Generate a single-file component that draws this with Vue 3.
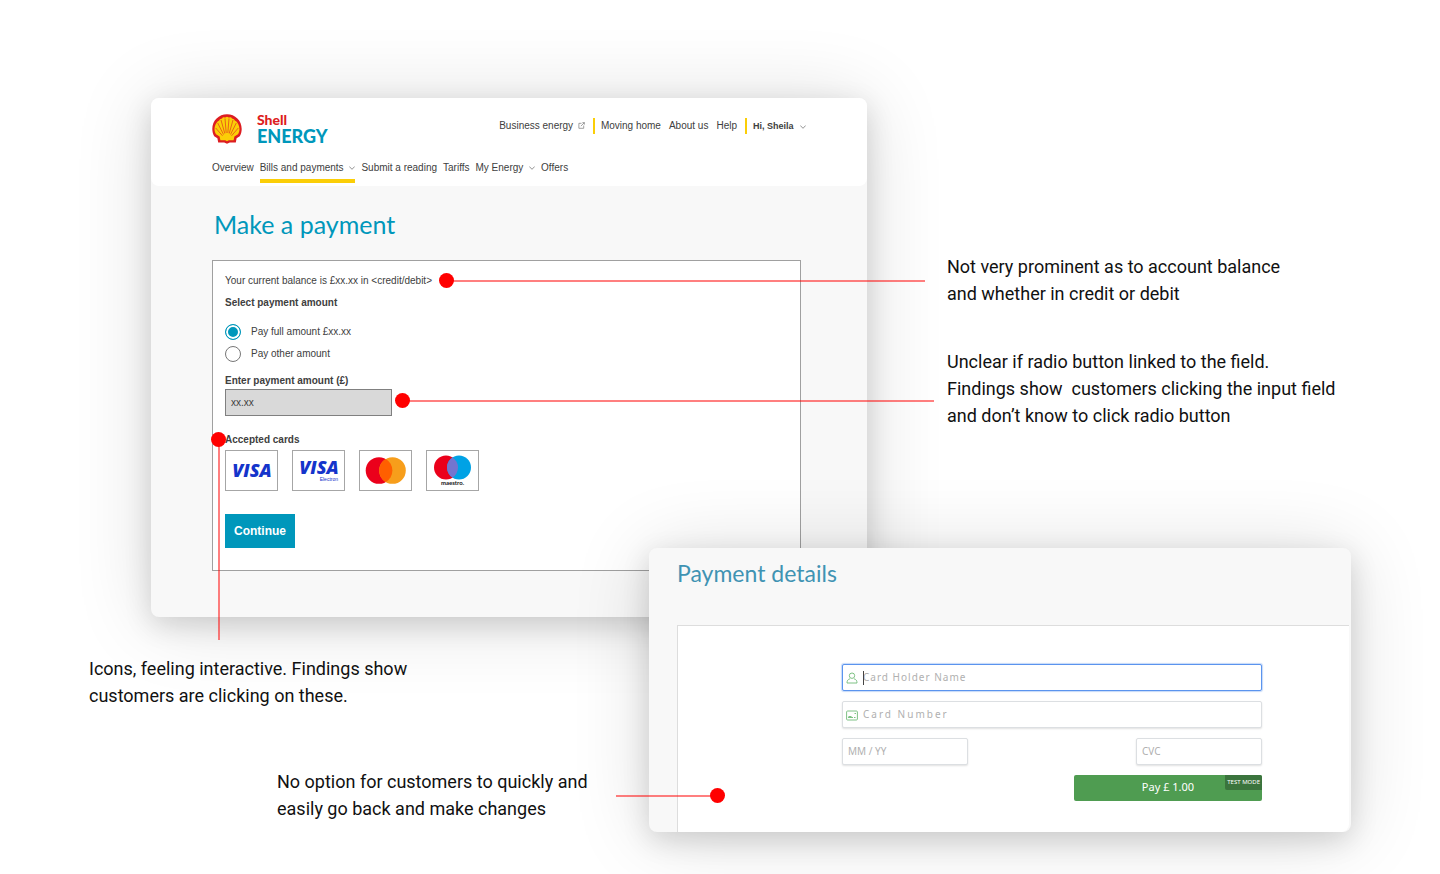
<template>
  <div class="board">
    <section class="panel account">
      <header>
        <div class="top-row">
          <a href="#" class="logo" @click.prevent>
            <svg class="pecten" viewBox="0 0 30 30" aria-hidden="true">
              <path d="M6.2 28.6 5.4 24.2 2.2 22.2C.9 20 .3 17.500.3 15 .3 6.600 6.900.3 15 .3S29.700 6.600 29.700 15c0 2.500-.6 5-1.900 7.200l-3.200 2-.8 4.400h-6L15 29.700l-2.800-1.100z" fill="#dd1d21" />
              <path d="M8.400 26.200 7.600 22.600 4 20.200C3 18.600 2.500 16.900 2.500 15 2.600 12 3.900 9.200 5.600 7.500L7.200 6.600 8 5.300 10 4.500 11 3.300 13.200 3.400 15 2.700l1.800.7 2.200-.1 1 1.200 2 .8.8 1.300 1.600.9c1.700 1.700 3 4.500 3.100 7.500 0 1.900-.5 3.600-1.500 5.200l-3.600 2.400-.8 3.600h-4.800L15 27.200l-1.800-1z" fill="#fbce07" />
              <path d="M14.200 19 13 4.500M15.800 19 17 4.500M12.800 19.500 9 6M17.200 19.500 21 6M11.500 20.500 5.700 9M18.500 20.500 24.300 9M10.500 21.800 3.700 14M19.500 21.800 26.300 14" stroke="#dd1d21" stroke-width=".6" fill="none" />
            </svg>
            <span class="wordmark">
              <span class="shell">Shell</span>
              <span class="energy">ENERGY</span>
            </span>
          </a>
          <nav class="links">
            <a href="#" @click.prevent>Business energy
              <svg class="external" viewBox="0 0 8 8" aria-hidden="true"><path d="M4 1.500H1v5.700h5.500V4M3.300 4.700 7.200.8M5 .7h2.300V3" /></svg>
            </a>
            <a href="#" class="bar" @click.prevent>Moving home</a>
            <a href="#" @click.prevent>About us</a>
            <a href="#" @click.prevent>Help</a>
            <a href="#" class="bar user" @click.prevent>Hi, Sheila
              <svg class="chevron" viewBox="0 0 6 4" aria-hidden="true"><path d="M.3.5 3 3.300 5.700.5" /></svg>
            </a>
          </nav>
        </div>
        <nav class="main-nav">
          <a v-for="item in navItems" :key="item.name" href="#" :class="{ active: item.name === currentNav }" @click.prevent="currentNav = item.name">
            {{ item.name }}
            <svg v-if="item.menu" class="chevron" viewBox="0 0 6 4" aria-hidden="true"><path d="M.3.5 3 3.300 5.700.5" /></svg>
          </a>
        </nav>
      </header>

      <h1>Make a payment</h1>
      <form class="payment" @submit.prevent>
        <p>Your current balance is £xx.xx in &lt;credit/debit&gt;</p>
        <fieldset>
          <legend>Select payment amount</legend>
          <label class="option"><input type="radio" v-model="payType" value="full">Pay full amount £xx.xx</label>
          <label class="option"><input type="radio" v-model="payType" value="other">Pay other amount</label>
        </fieldset>
        <label class="field-name" for="amount">Enter payment amount (£)</label>
        <input id="amount" class="amount" type="text" v-model="amount">
        <h2>Accepted cards</h2>
        <ul class="cards">
          <li>
            <svg viewBox="0 0 51 39" role="img" aria-label="Visa">
              <text class="visa" x="26" y="26" text-anchor="middle">VISA</text>
            </svg>
          </li>
          <li>
            <svg viewBox="0 0 51 39" role="img" aria-label="Visa Electron">
              <text class="visa" x="26" y="23" text-anchor="middle">VISA</text>
              <text class="electron" x="45" y="30" text-anchor="end">Electron</text>
            </svg>
          </li>
          <li>
            <svg viewBox="0 0 51 39" role="img" aria-label="Mastercard">
              <circle cx="19" cy="19.500" r="13.300" fill="#eb001b" />
              <circle cx="32.500" cy="19.500" r="13.300" fill="#f79e1b" />
              <path d="M25.750 8a13.300 13.300 0 0 1 0 23 13.300 13.300 0 0 1 0-23z" fill="#ff5f00" />
            </svg>
          </li>
          <li>
            <svg viewBox="0 0 51 39" role="img" aria-label="Maestro">
              <circle cx="19" cy="16.500" r="12" fill="#eb001b" />
              <circle cx="32" cy="16.500" r="12" fill="#00a2e5" />
              <path d="M25.500 6.400a12 12 0 0 1 0 20.200 12 12 0 0 1 0-20.200z" fill="#7375cf" />
              <text class="maestro" x="25.500" y="34" text-anchor="middle">maestro.</text>
            </svg>
          </li>
        </ul>
        <button class="continue" type="submit">Continue</button>
      </form>
    </section>

    <section class="panel details">
      <h2>Payment details</h2>
      <div class="sheet">
        <form class="card-form" @submit.prevent>
          <div class="icon-field focused">
            <svg viewBox="0 0 12 12" aria-hidden="true"><circle cx="6" cy="3.700" r="2.700" /><path d="M4 6.800C2 7.300 1 8.500 1 11h10c0-2.500-1-3.700-3-4.200" /></svg>
            <span class="caret"></span>
            <input type="text" aria-label="Card Holder Name" placeholder="Card Holder Name">
          </div>
          <div class="icon-field number">
            <svg viewBox="0 0 12 12" aria-hidden="true"><rect x=".6" y="2" width="10.800" height="9" rx="1" /><path d="M2 8.500h5M8 8.500h1.500M2.500 7.500h3M8.500 4.500h1.500" /></svg>
            <input type="text" aria-label="Card Number" placeholder="Card Number">
          </div>
          <div class="pair">
            <input type="text" aria-label="Expiry date" placeholder="MM / YY">
            <input type="text" aria-label="CVC" placeholder="CVC">
          </div>
          <button class="pay" type="submit">Pay £ 1.00<span class="test-mode">TEST MODE</span></button>
        </form>
      </div>
    </section>

    <!-- callouts -->
    <div class="pin pin-balance"></div>
    <p class="note note-balance">Not very prominent as to account balance<br>and whether in credit or debit</p>

    <div class="pin pin-field"></div>
    <p class="note note-field">Unclear if radio button linked to the field.<br>Findings show&nbsp; customers clicking the input field<br>and don’t know to click radio button</p>

    <div class="pin down pin-cards"></div>
    <p class="note note-cards">Icons, feeling interactive. Findings show<br>customers are clicking on these.</p>

    <div class="pin left pin-back"></div>
    <p class="note note-back">No option for customers to quickly and<br>easily go back and make changes</p>
  </div>
</template>

<script setup>
import { ref } from 'vue';

const navItems = [
  { name: 'Overview' },
  { name: 'Bills and payments', menu: true },
  { name: 'Submit a reading' },
  { name: 'Tariffs' },
  { name: 'My Energy', menu: true },
  { name: 'Offers' }
];

const currentNav = ref('Bills and payments');
const payType = ref('full');
const amount = ref('xx.xx');
</script>

<style>
body { margin: 0; background: #fff; }
</style>

<style scoped>
.board {
  position: relative;
  min-height: 100vh;
  overflow: hidden;
  font-family: "Liberation Sans", Arial, sans-serif;
  font-size: 10px;
  color: #404040;
}
.board * { box-sizing: border-box; }
h1, h2, p, ul, fieldset, legend { margin: 0; padding: 0; border: none; }
a { color: inherit; text-decoration: none; }
input, button { font: inherit; color: inherit; }

/* windows */
.panel {
  position: absolute;
  border-radius: 8px;
  background: #f8f8f8;
  box-shadow: 0 8px 28px rgba(0, 0, 0, 0.14), 0 4px 80px rgba(0, 0, 0, 0.14);
}
.account { left: 151px; top: 98px; width: 716px; padding-bottom: 46px; }
.details { left: 649px; top: 548px; width: 702px; padding: 0 2px 0 28px; }

header {
  height: 88px;
  padding: 15px 61px 0;
  border-radius: 8px;
  background: #fff;
}
.top-row { display: flex; justify-content: space-between; }
.logo { display: flex; gap: 15px; }
.pecten { width: 30px; height: 32px; }
.wordmark {
  display: flex;
  flex-direction: column;
  font-family: Lato, sans-serif;
  font-weight: 900;
}
.shell { font-size: 14px; line-height: 14px; color: #dd1d21; }
.energy { font-size: 18px; line-height: 18px; color: #0097bb; }
.links { display: flex; gap: 8px; height: 25px; line-height: 16px; padding-top: 5px; }
.bar { height: 16px; padding-left: 6px; border-left: 2px solid #fbce07; }
.user { font-size: 9px; font-weight: bold; }
.chevron, .external { fill: none; stroke: #666; stroke-width: 0.7; }
.chevron { width: 6px; height: 4px; margin-left: 3px; vertical-align: middle; }
.user .chevron { margin-left: 4px; }
.external { width: 7px; height: 7px; margin-left: 2px; }
.main-nav { display: flex; gap: 6px; margin-top: 15px; }
.main-nav a { height: 23px; line-height: 16px; border-bottom: 4px solid transparent; }
.main-nav a.active { border-color: #fbce07; }

h1 {
  padding: 18px 63px 0;
  font-family: Lato, sans-serif;
  font-size: 25px;
  font-weight: 400;
  line-height: 40px;
  color: #0097bb;
}
.payment {
  margin: 16px 66px 0 61px;
  padding: 12px 12px 22px;
  border: 1px solid #a0a0a0;
  background: #fff;
  line-height: 16px;
}
legend { padding: 6px 0 10px; font-weight: bold; }
.option { display: flex; align-items: center; gap: 10px; height: 22px; }
.option input {
  appearance: none;
  width: 16px;
  height: 16px;
  margin: 0;
  border: 1px solid #777;
  border-radius: 50%;
}
.option input:checked {
  border-color: #0097bb;
  background: #0097bb;
  box-shadow: inset 0 0 0 2px #fff;
}
.field-name { display: block; margin-top: 8px; font-weight: bold; }
.amount {
  display: block;
  width: 167px;
  height: 27px;
  padding: 0 5px;
  border: 1px solid #808080;
  background: #d9d9d9;
}
.payment h2 { margin-top: 16px; font-size: 10px; line-height: 16px; }
.cards { display: flex; gap: 14px; padding-top: 2px; list-style: none; }
.cards li { width: 53px; height: 41px; border: 1px solid #a6a6a6; }
.cards svg { display: block; width: 100%; height: 100%; }
.visa {
  font-family: "Open Sans", sans-serif;
  font-size: 18px;
  font-style: italic;
  font-weight: 800;
  fill: #1434cb;
}
.electron { font-size: 5px; fill: #1434cb; }
.maestro { font-family: Lato, sans-serif; font-size: 6px; font-weight: bold; fill: #111; }
.continue {
  display: block;
  margin-top: 23px;
  padding: 0 9px;
  height: 34px;
  border: none;
  background: #0097bb;
  color: #fff;
  font-size: 12px;
  font-weight: bold;
}

.details h2 {
  font-family: Lato, sans-serif;
  font-size: 23px;
  font-weight: 400;
  line-height: 50px;
  color: #3f93b3;
}
.sheet {
  margin-top: 27px;
  padding: 38px 87px 31px 164px;
  border: solid #ddd;
  border-width: 1px 0 0 1px;
  border-bottom-right-radius: 8px;
  background: #fff;
}
.card-form {
  display: flex;
  flex-direction: column;
  gap: 10px;
  font-family: "Noto Sans", sans-serif;
}
.card-form input {
  display: block;
  width: 100%;
  height: 27px;
  padding: 0 5px 2px;
  border: 1px solid #dcdfe2;
  border-radius: 2px;
  background: #fff;
  box-shadow: 0 1px 2px rgba(0, 0, 0, 0.12);
  outline: none;
}
.card-form input::placeholder { color: #b0b0b0; opacity: 1; }
.icon-field { position: relative; }
.icon-field svg {
  position: absolute;
  left: 4px;
  top: 8px;
  width: 12px;
  height: 12px;
  fill: none;
  stroke: #7fc285;
}
.card-form .icon-field input { padding-left: 20px; letter-spacing: 1px; }
.card-form .focused input { border-color: #5b94ee; box-shadow: 0 0 1px 1px rgba(91, 148, 238, 0.35); }
.card-form .number input { letter-spacing: 2px; }
.caret { position: absolute; left: 21px; top: 7px; width: 1px; height: 14px; background: #444; }
.pair { display: flex; justify-content: space-between; }
.pair input { flex: 0 0 30%; }
.pay {
  position: relative;
  align-self: flex-end;
  width: 188px;
  height: 26px;
  padding: 0 0 3px;
  border: none;
  border-radius: 2px;
  background: #4f9c51;
  color: #fff;
  font-size: 11px;
}
.test-mode {
  position: absolute;
  top: 0;
  right: 0;
  padding: 0 2px;
  border-radius: 0 2px 0 2px;
  background: #3b743d;
  font-size: 6px;
  line-height: 15px;
}

/* callouts on the board */
.pin { position: absolute; height: 2px; background: rgba(255, 0, 0, 0.5); }
.pin::before {
  content: "";
  position: absolute;
  left: -8px;
  top: -7px;
  width: 15px;
  height: 15px;
  border-radius: 50%;
  background: #f00;
}
.pin.left::before { left: auto; right: -8px; }
.pin.down { width: 2px; }
.pin.down::before { left: -7px; top: -8px; }
.pin-balance { left: 447px; top: 280px; width: 478px; }
.pin-field { left: 403px; top: 400px; width: 531px; }
.pin-cards { left: 218px; top: 440px; height: 200px; }
.pin-back { left: 616px; top: 795px; width: 101px; }
.note {
  position: absolute;
  font-family: Roboto, sans-serif;
  font-size: 18px;
  line-height: 27px;
  white-space: nowrap;
  color: #111;
}
.note-balance { left: 947px; top: 253px; }
.note-field { left: 947px; top: 348px; }
.note-cards { left: 89px; top: 655px; }
.note-back { left: 277px; top: 768px; }
</style>
